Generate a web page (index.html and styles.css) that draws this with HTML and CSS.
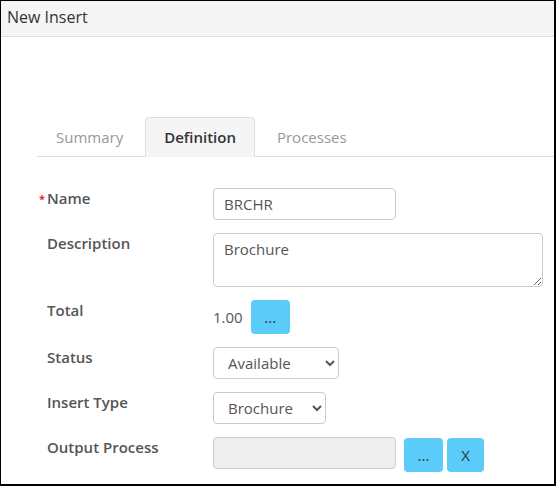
FILE: index.html
```html
<!DOCTYPE html>
<html>
<head>
<meta charset="utf-8">
<link rel="stylesheet" href="styles.css">
</head>
<body>
<div class="frame">
  <div class="header">New Insert</div>
  <div class="content">
    <ul class="tabs">
      <li class="tab">Summary</li>
      <li class="tab active">Definition</li>
      <li class="tab">Processes</li>
    </ul>
    <div class="form">
      <div class="label"><span class="req">*</span>Name</div>
      <div class="ctrl"><input class="input name" type="text" value="BRCHR"></div>

      <div class="label">Description</div>
      <div class="ctrl"><textarea class="input desc">Brochure</textarea></div>

      <div class="label">Total</div>
      <div class="ctrl row"><span class="total">1.00</span><button class="btn b1">...</button></div>

      <div class="label">Status</div>
      <div class="ctrl"><select class="input sel status"><option>Available</option></select></div>

      <div class="label">Insert Type</div>
      <div class="ctrl"><select class="input sel type"><option>Brochure</option></select></div>

      <div class="label">Output Process</div>
      <div class="ctrl row out"><input class="input name disabled" type="text" disabled><button class="btn b2">...</button><button class="btn b3">X</button></div>
    </div>
  </div>
</div>
</body>
</html>
```

FILE: styles.css
```css
* { box-sizing: border-box; }
html, body { margin: 0; padding: 0; background: #fff; }
body { font-family: "Open Sans", "Noto Sans", sans-serif; font-size: 15px; color: #333; }
.frame {
  width: 556px;
  height: 486px;
  border: 1px solid #000;
  border-right-width: 2px;
  border-bottom-width: 2px;
  overflow: hidden;
}
.header {
  height: 36px;
  background: #f5f5f5;
  border-bottom: 1px solid #ddd;
  padding-left: 6px;
  line-height: 32px;
  font-size: 16px;
  color: #333;
}
.content { padding-left: 36px; padding-top: 80px; }
.tabs {
  list-style: none;
  margin: 0;
  padding: 0;
  display: flex;
  border-bottom: 1px solid #ddd;
  height: 40px;
}
.tab {
  padding: 0 18px;
  line-height: 38px;
  margin-right: 3px;
  color: #999;
  border: 1px solid transparent;
  border-bottom: none;
  border-radius: 4px 4px 0 0;
  height: 40px;
}
.tab.active {
  background: #f5f5f5;
  border-color: #ddd;
  color: #333;
  font-weight: 600;
}
.form {
  display: grid;
  grid-template-columns: 166px 1fr;
  row-gap: 13px;
  padding-top: 31px;
  padding-left: 10px;
}
.label {
  font-weight: 600;
  color: #555;
  line-height: 20px;
  position: relative;
}
.req {
  position: absolute;
  left: -8px;
  top: 1px;
  color: #e00;
  font-size: 11px;
}
.ctrl { display: flex; }
.row { align-items: center; }
.input {
  font-family: "Open Sans", "Noto Sans", sans-serif;
  font-size: 15px;
  color: #555;
  border: 1px solid #ccc;
  border-radius: 4px;
  background: #fff;
  height: 32px;
  padding: 0 10px;
  margin: 0;
}
.name { width: 183px; }
.desc { width: 330px; height: 54px; padding: 4px 10px; resize: vertical; line-height: 22px; }
.sel { padding: 0 8px 0 10px; }
.status { width: 126px; }
.type { width: 113px; }
.disabled { background: #eee; }
.total { color: #555; margin-right: 8px; }
.btn {
  font-family: "Open Sans", "Noto Sans", sans-serif;
  font-size: 15px;
  color: #333;
  background: #5bcbfa;
  border: none;
  border-radius: 4px;
  height: 34px;
  padding: 0;
  margin: 0;
}
.b1 { width: 39px; }
.out { align-items: flex-start; }
.b2 { width: 39px; margin-left: 8px; margin-top: 1px; }
.b3 { width: 37px; margin-left: 4px; margin-top: 1px; }
```
